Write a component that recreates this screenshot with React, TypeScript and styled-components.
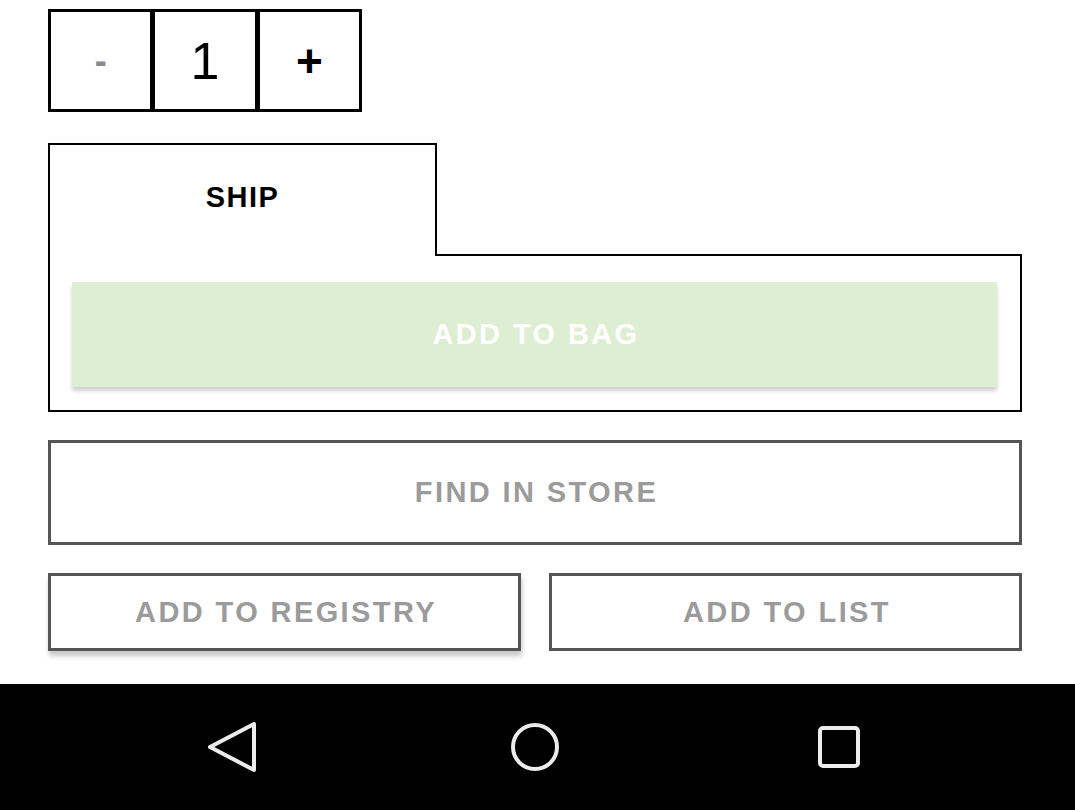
import React from "react";
import styled, { createGlobalStyle } from "styled-components";

const Global = createGlobalStyle`
  html, body { margin: 0; padding: 0; background: #fff; }
  body { font-family: "Liberation Sans", Arial, sans-serif; }
`;

const Page = styled.div`
  width: 1075px;
  height: 810px;
  display: flex;
  flex-direction: column;
  overflow: hidden;
`;

const Content = styled.div`
  flex: 1;
  display: flex;
  flex-direction: column;
  padding: 9px 53px 0 48px;
`;

const Stepper = styled.div`
  display: flex;
  width: 314px;
  height: 103px;
`;

const StepCell = styled.div<{ $tone: "muted" | "value" | "strong" }>`
  flex: 1;
  box-sizing: border-box;
  border: 3px solid #000;
  & + & { margin-left: -1px; }
  display: flex;
  align-items: center;
  justify-content: center;
  font-family: "Liberation Sans", Arial, sans-serif;
  color: ${(p) => (p.$tone === "muted" ? "#8a8a8a" : "#000")};
  font-size: ${(p) => (p.$tone === "value" ? "52px" : p.$tone === "strong" ? "46px" : "36px")};
  font-weight: ${(p) => (p.$tone === "value" ? 400 : 700)};
  line-height: 1;
`;

const TabRow = styled.div`
  margin-top: 31px;
  display: flex;
  height: 113px;
`;

const Tab = styled.div`
  box-sizing: border-box;
  width: 389px;
  border: 2px solid #000;
  border-bottom: none;
  display: flex;
  align-items: center;
  justify-content: center;
  padding-bottom: 6px;
  font-size: 29px;
  font-weight: 700;
  letter-spacing: 1.5px;
  color: #000;
`;

const TabFill = styled.div`
  flex: 1;
  border-bottom: 2px solid #000;
`;

const Panel = styled.div`
  box-sizing: border-box;
  height: 156px;
  border: 2px solid #000;
  border-top: none;
  padding: 26px 23px 0 22px;
`;

const ActionButton = styled.div<{ $variant: "primary" | "outline"; $shadow?: boolean; $h: number }>`
  box-sizing: border-box;
  height: ${(p) => p.$h}px;
  display: flex;
  align-items: center;
  justify-content: center;
  font-size: 29px;
  font-weight: 700;
  letter-spacing: 2.4px;
  padding-left: 3px;
  background: ${(p) => (p.$variant === "primary" ? "#deeed3" : "#fff")};
  color: ${(p) => (p.$variant === "primary" ? "#ffffff" : "#9b9b9b")};
  border: ${(p) => (p.$variant === "primary" ? "none" : "3px solid #555")};
  box-shadow: ${(p) =>
    p.$variant === "primary"
      ? "0 4px 4px rgba(0,0,0,0.18)"
      : p.$shadow
      ? "1px 5px 5px rgba(0,0,0,0.22)"
      : "none"};
`;

const StoreRow = styled.div`
  margin-top: 28px;
`;

const SplitRow = styled.div`
  margin-top: 28px;
  display: grid;
  grid-template-columns: 1fr 1fr;
  column-gap: 28px;
`;

const NavBar = styled.div`
  height: 126px;
  background: #000;
  display: grid;
  grid-template-columns: repeat(3, 1fr);
  align-items: center;
  justify-items: center;
  padding: 0 20px 0 20px;
`;

const NavIcon = styled.svg`
  width: 56px;
  height: 56px;
  display: block;
`;

const NavSlot = styled.div<{ $shift: number }>`
  transform: translateX(${(p) => p.$shift}px);
`;

export default function App() {
  return (
    <Page>
      <Global />
      <Content>
        <Stepper>
          <StepCell $tone="muted">-</StepCell>
          <StepCell $tone="value">1</StepCell>
          <StepCell $tone="strong">+</StepCell>
        </Stepper>
        <TabRow>
          <Tab>SHIP</Tab>
          <TabFill />
        </TabRow>
        <Panel>
          <ActionButton $variant="primary" $h={105}>ADD TO BAG</ActionButton>
        </Panel>
        <StoreRow>
          <ActionButton $variant="outline" $h={105}>FIND IN STORE</ActionButton>
        </StoreRow>
        <SplitRow>
          <ActionButton $variant="outline" $shadow $h={78}>ADD TO REGISTRY</ActionButton>
          <ActionButton $variant="outline" $h={78}>ADD TO LIST</ActionButton>
        </SplitRow>
      </Content>
      <NavBar>
        <NavSlot $shift={41}>
          <NavIcon viewBox="0 0 56 56">
            <path
              d="M48 5 L48 51 L4 28 Z"
              fill="none"
              stroke="#ececec"
              strokeWidth="4"
              strokeLinejoin="round"
            />
          </NavIcon>
        </NavSlot>
        <NavSlot $shift={-3}>
          <NavIcon viewBox="0 0 56 56">
            <circle cx="28" cy="28" r="22" fill="none" stroke="#ececec" strokeWidth="4" />
          </NavIcon>
        </NavSlot>
        <NavSlot $shift={-44}>
          <NavIcon viewBox="0 0 56 56">
            <rect x="9" y="9" width="38" height="38" rx="3" fill="none" stroke="#ececec" strokeWidth="4" />
          </NavIcon>
        </NavSlot>
      </NavBar>
    </Page>
  );
}
